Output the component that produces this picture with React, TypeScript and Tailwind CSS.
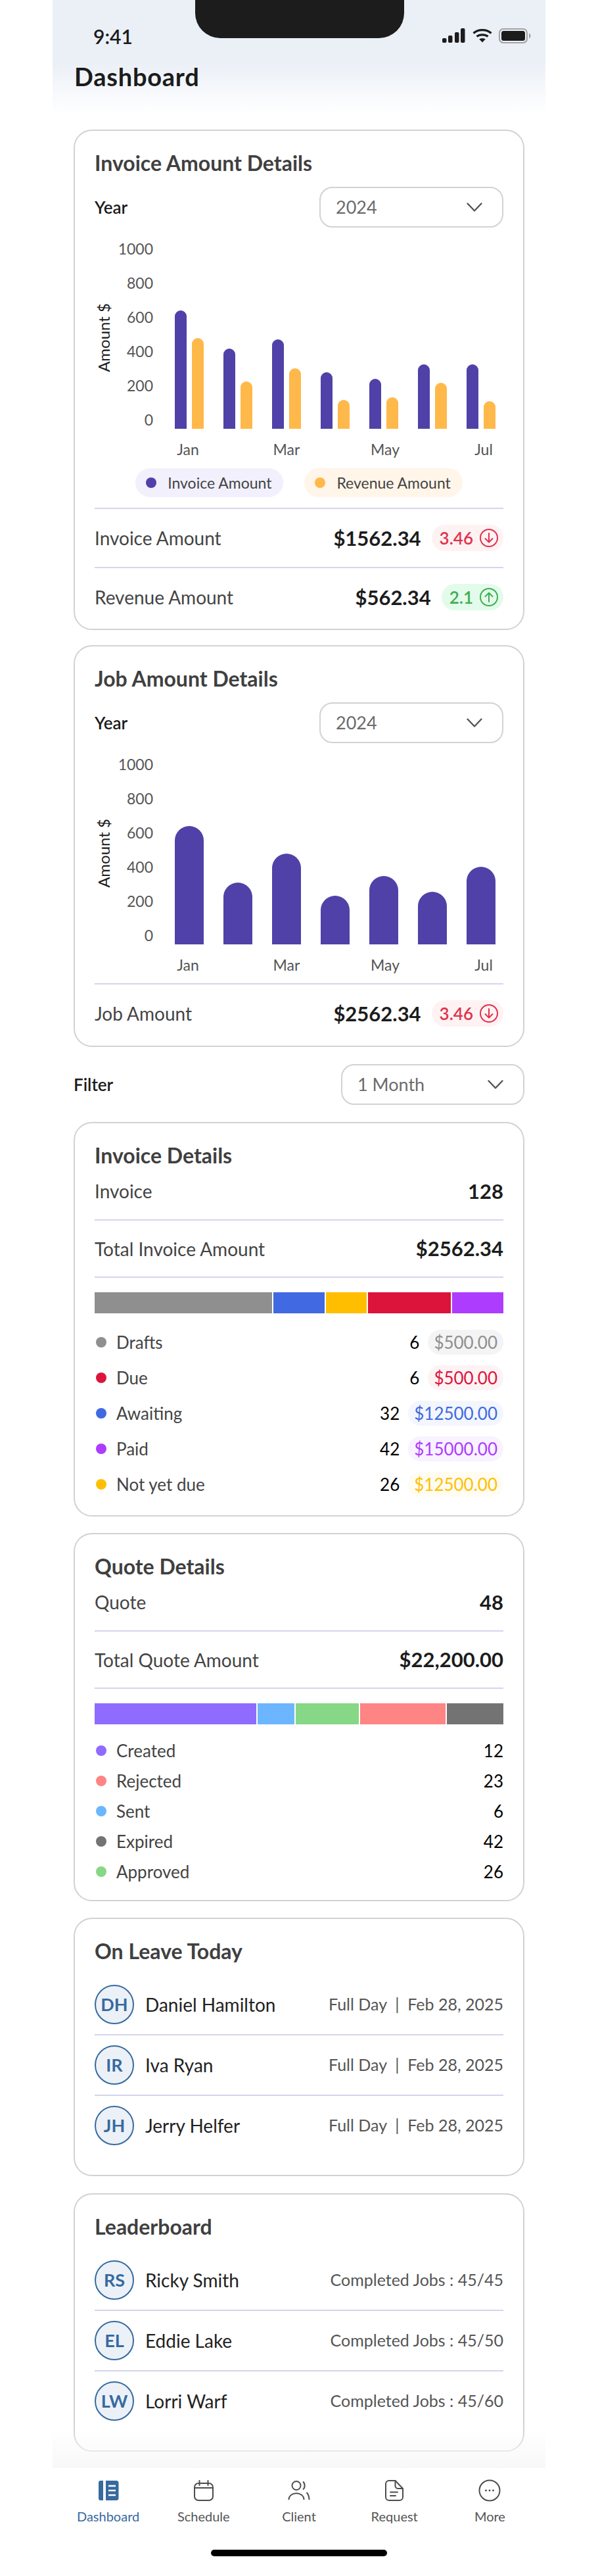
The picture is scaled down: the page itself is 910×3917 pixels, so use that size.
import React from "react";

const FONT = "font-[Lato,sans-serif]";

function Divider() {
  return <div className="h-[2px] bg-[#d6d4ee]" />;
}

function Chevron() {
  return (
    <svg width="24" height="14" viewBox="0 0 24 14" fill="none" className="shrink-0">
      <path d="M1.5 1.5 L12 12.5 L22.5 1.5" stroke="#555555" strokeWidth="2.4" strokeLinecap="round" strokeLinejoin="round" />
    </svg>
  );
}

function Select({ label, className }: { label: string; className: string }) {
  return (
    <div className={`flex h-[62px] items-center justify-between rounded-[20px] border-2 border-[#d2d2d2] bg-white pl-[23px] pr-[30px] ${className}`}>
      <span className="text-[27px] text-[#6b6b6b]">{label}</span>
      <Chevron />
    </div>
  );
}

function Card({ title, children, className = "" }: { title: string; children: React.ReactNode; className?: string }) {
  return (
    <section className={`mx-[32px] rounded-[28px] border-2 border-[#d2d2d2] bg-white px-[30px] pt-[31px] ${className}`}>
      <h2 className="text-[32px] font-bold leading-[36px] text-[#404040]">{title}</h2>
      {children}
    </section>
  );
}

function ArrowBadgeIcon({ up, color }: { up: boolean; color: string }) {
  return (
    <svg width="28" height="28" viewBox="0 0 28 28" fill="none" className="shrink-0">
      <circle cx="14" cy="14" r="13" stroke={color} strokeWidth="2" />
      {up ? (
        <path d="M14 21 V8 M8.5 13 L14 7.5 L19.5 13" stroke={color} strokeWidth="2" strokeLinecap="round" strokeLinejoin="round" />
      ) : (
        <path d="M14 7 V20 M8.5 15 L14 20.5 L19.5 15" stroke={color} strokeWidth="2" strokeLinecap="round" strokeLinejoin="round" />
      )}
    </svg>
  );
}

function AmountRow({ label, amount, delta, up }: { label: string; amount: string; delta: string; up: boolean }) {
  return (
    <div className="flex h-[88px] items-center justify-between">
      <span className="text-[28px] text-[#444444]">{label}</span>
      <div className="flex items-center gap-[16px]">
        <span className="text-[31px] font-bold text-[#1c1c1c]">{amount}</span>
        <span className={`flex h-[40px] items-center gap-[10px] rounded-full pl-[12px] pr-[8px] ${up ? "bg-[#e3fbeb]" : "bg-[#fef2f3]"}`}>
          <span className={`text-[26px] font-semibold ${up ? "text-[#3fae50]" : "text-[#e0324b]"}`}>{delta}</span>
          <ArrowBadgeIcon up={up} color={up ? "#3fae50" : "#e0324b"} />
        </span>
      </div>
    </div>
  );
}

const AXIS = ["1000", "800", "600", "400", "200", "0"];
const MONTHS = ["Jan", "", "Mar", "", "May", "", "Jul"];

function Chart({ children }: { children: React.ReactNode }) {
  return (
    <div className="mt-[6px] flex">
      <div className="flex h-[312px] w-[24px] items-center justify-center pl-[4px] pt-[10px]">
        <span className="rotate-180 whitespace-nowrap text-[24px] font-normal leading-[24px] text-[#1c1c1c] [writing-mode:vertical-rl]">Amount $</span>
      </div>
      <div className="flex w-[65px] flex-col items-end">
        {AXIS.map((a) => (
          <div key={a} className="flex h-[52px] items-center text-[23px] text-[#555555]">{a}</div>
        ))}
      </div>
      <div className="ml-[33px] flex-1">
        <div className="flex h-[300px] items-end gap-[30px]">{children}</div>
        <div className="mt-[19px] flex gap-[35px]">
          {MONTHS.map((m, i) => (
            <div key={i} className="flex h-[24px] w-[40px] items-center justify-center whitespace-nowrap text-[23px] text-[#555555]">{m}</div>
          ))}
        </div>
      </div>
    </div>
  );
}

const PAIRS: [number, number][] = [
  [180, 138],
  [122, 72],
  [136, 92],
  [86, 44],
  [76, 48],
  [98, 70],
  [98, 42],
];
const SINGLES = [180, 94, 138, 74, 104, 80, 118];

function Legend({ dot, bg, label }: { dot: string; bg: string; label: string }) {
  return (
    <div className={`flex h-[44px] items-center gap-[17px] rounded-full pl-[16px] pr-[18px] ${bg}`}>
      <span className={`h-[16px] w-[16px] rounded-full ${dot}`} />
      <span className="text-[23px] text-[#444444]">{label}</span>
    </div>
  );
}

function StatRow({ label, value, first }: { label: string; value: string; first?: boolean }) {
  return (
    <>
      <div className={`flex items-center justify-between ${first ? "mb-[7px] h-[72px]" : "h-[85px]"}`}>
        <span className="text-[28px] text-[#444444]">{label}</span>
        <span className="text-[31px] font-bold text-[#1c1c1c]">{value}</span>
      </div>
      <Divider />
    </>
  );
}

const INVOICE_SEGMENTS = [
  { w: "w-[270px]", c: "bg-[#8f8f8f]" },
  { w: "w-[78px]", c: "bg-[#4169e1]" },
  { w: "w-[62px]", c: "bg-[#ffbf00]" },
  { w: "w-[126px]", c: "bg-[#dc143c]" },
  { w: "flex-1", c: "bg-[#ad3cff]" },
];
const INVOICE_ROWS = [
  { label: "Drafts", count: "6", amount: "$500.00", dot: "bg-[#8f8f8f]", text: "text-[#8f8f8f]", bg: "bg-[#f4f4f4]" },
  { label: "Due", count: "6", amount: "$500.00", dot: "bg-[#dc143c]", text: "text-[#dc143c]", bg: "bg-[#fdf3f5]" },
  { label: "Awaiting", count: "32", amount: "$12500.00", dot: "bg-[#4169e1]", text: "text-[#4169e1]", bg: "bg-[#f3f6fd]" },
  { label: "Paid", count: "42", amount: "$15000.00", dot: "bg-[#ad3cff]", text: "text-[#ad3cff]", bg: "bg-[#f9f2ff]" },
  { label: "Not yet due", count: "26", amount: "$12500.00", dot: "bg-[#ffbf00]", text: "text-[#ffbf00]", bg: "bg-[#fffcf2]" },
];
const QUOTE_SEGMENTS = [
  { w: "w-[246px]", c: "bg-[#8f6bff]" },
  { w: "w-[56px]", c: "bg-[#6cb6ff]" },
  { w: "w-[96px]", c: "bg-[#86d886]" },
  { w: "w-[130px]", c: "bg-[#ff8484]" },
  { w: "flex-1", c: "bg-[#737373]" },
];
const QUOTE_ROWS = [
  { label: "Created", count: "12", dot: "bg-[#8f6bff]" },
  { label: "Rejected", count: "23", dot: "bg-[#ff8484]" },
  { label: "Sent", count: "6", dot: "bg-[#6cb6ff]" },
  { label: "Expired", count: "42", dot: "bg-[#737373]" },
  { label: "Approved", count: "26", dot: "bg-[#86d886]" },
];

function Segments({ items }: { items: { w: string; c: string }[] }) {
  return (
    <div className="mt-[22px] flex h-[32px] gap-[2px]">
      {items.map((s, i) => (
        <div key={i} className={`${s.w} ${s.c}`} />
      ))}
    </div>
  );
}

function PersonRow({ initials, name, right, rightSize, last }: { initials: string; name: string; right: string; rightSize: string; last?: boolean }) {
  return (
    <>
      <div className="flex h-[90px] items-center">
        <div className="flex h-[60px] w-[60px] items-center justify-center rounded-full border-2 border-[#376a9f] bg-[#ecf1f8] text-[27px] font-bold text-[#376a9f]">{initials}</div>
        <span className="ml-[17px] text-[28px] text-[#222222]">{name}</span>
        <span className={`ml-auto whitespace-pre text-[#555555] ${rightSize}`}>{right}</span>
      </div>
      {!last && <Divider />}
    </>
  );
}

function DashboardIcon() {
  return (
    <svg width="32" height="32" viewBox="0 0 32 32">
      <path d="M4 1 H8 V31 H4 A3 3 0 0 1 1 28 V4 A3 3 0 0 1 4 1 Z" fill="#376a9f" />
      <path d="M12 1 H28 A3.5 3.5 0 0 1 31.5 4.5 V27.5 A3.5 3.5 0 0 1 28 31 H12 Z" fill="#376a9f" />
      <path d="M16 9 H27 M16 16 H27 M16 23 H27" stroke="#ffffff" strokeWidth="2.6" />
    </svg>
  );
}
function ScheduleIcon() {
  return (
    <svg width="32" height="32" viewBox="0 0 32 32" fill="none" stroke="#4d4d4d" strokeWidth="2" strokeLinecap="round">
      <rect x="2" y="5" width="28" height="26" rx="6" />
      <path d="M2 12 H30 M9.5 1 V8 M22.5 1 V8" />
    </svg>
  );
}
function ClientIcon() {
  return (
    <svg width="34" height="32" viewBox="0 0 34 32" fill="none" stroke="#4d4d4d" strokeWidth="2">
      <circle cx="13" cy="8.5" r="6.5" />
      <path d="M23 2.5 C26.5 5 26.5 12 23 14.5" />
      <path d="M1.5 30 C1.5 17 24.5 17 24.5 30" />
      <path d="M28.5 19 C31 21.5 32.5 25 32.5 30" />
    </svg>
  );
}
function RequestIcon() {
  return (
    <svg width="28" height="32" viewBox="0 0 28 32" fill="none" stroke="#4d4d4d" strokeWidth="2" strokeLinecap="round" strokeLinejoin="round">
      <path d="M6 1 H15.5 L27 13 V26 A5 5 0 0 1 22 31 H6 A5 5 0 0 1 1 26 V6 A5 5 0 0 1 6 1 Z" />
      <path d="M15.5 1 V9 A4 4 0 0 0 19.5 13 H27" />
      <path d="M8 18.5 H19 M8 24 H16" />
    </svg>
  );
}
function MoreIcon() {
  return (
    <svg width="34" height="34" viewBox="0 0 34 34" fill="none">
      <circle cx="17" cy="17" r="15.5" stroke="#4d4d4d" strokeWidth="2" />
      <circle cx="11.5" cy="17" r="1.4" fill="#4d4d4d" />
      <circle cx="17" cy="17" r="1.4" fill="#4d4d4d" />
      <circle cx="22.5" cy="17" r="1.4" fill="#4d4d4d" />
    </svg>
  );
}

const NAV = [
  { label: "Dashboard", icon: <DashboardIcon />, active: true },
  { label: "Schedule", icon: <ScheduleIcon /> },
  { label: "Client", icon: <ClientIcon /> },
  { label: "Request", icon: <RequestIcon /> },
  { label: "More", icon: <MoreIcon /> },
];

function StatusIcons() {
  return (
    <div className="flex items-start gap-[11px]">
      <svg width="35" height="22" viewBox="0 0 35 22" fill="#1c1c1c">
        <rect x="0" y="15" width="6.5" height="7" rx="2" />
        <rect x="9" y="11" width="6.5" height="11" rx="2" />
        <rect x="19" y="6" width="6.5" height="16" rx="2" />
        <rect x="28" y="0" width="6.5" height="22" rx="2" />
      </svg>
      <svg width="30" height="22" viewBox="0 0 30 22" fill="none" stroke="#1c1c1c" strokeWidth="3.4">
        <path d="M1.5 7.5 C9 1 21 1 28.5 7.5" />
        <path d="M6.5 12.5 C11 9 19 9 23.5 12.5" />
        <path d="M15 21.5 L10.2 16.6 C13 14.7 17 14.7 19.8 16.6 Z" fill="#1c1c1c" stroke="none" />
      </svg>
      <svg width="49" height="23" viewBox="0 0 49 23" className="ml-[-1px]">
        <rect x="1" y="1" width="42" height="21" rx="6" fill="none" stroke="#a3a3a3" strokeWidth="2" />
        <rect x="4" y="4" width="36" height="15" rx="3.5" fill="#1c1c1c" />
        <path d="M46 7.5 C47.8 8.2 48.6 9.8 48.6 11.5 C48.6 13.2 47.8 14.8 46 15.5 Z" fill="#a3a3a3" />
      </svg>
    </div>
  );
}

export default function App() {
  return (
    <div className={`flex w-full justify-center bg-white ${FONT}`}>
      <div className="relative h-[3917px] w-[750px] overflow-hidden bg-white">
        <header className="relative h-[173px] bg-linear-to-b from-[#ebf0f7] from-55% to-white">
          <div className="absolute left-[217px] top-0 h-[58px] w-[318px] rounded-b-[38px] bg-[#1c1c1c]" />
          <div className="flex items-start justify-between pl-[62px] pr-[22px] pt-[43px]">
            <span className="text-[30px] font-semibold leading-[24px] text-[#1c1c1c]">9:41</span>
            <StatusIcons />
          </div>
          <h1 className="ml-[33px] mt-[27px] text-[38px] font-bold leading-[44px] tracking-[0.02em] text-[#1c1c1c]">Dashboard</h1>
        </header>

        <main>
          <Card title="Invoice Amount Details" className="mt-[24px] pb-[4px]">
            <div className="mt-[18px] flex items-center justify-between">
              <span className="text-[26px] font-semibold text-[#1c1c1c]">Year</span>
              <Select label="2024" className="w-[280px]" />
            </div>
            <Chart>
              {PAIRS.map(([a, b], i) => (
                <div key={i} className="flex w-[44px] items-end justify-between">
                  <div className="w-[18px] rounded-t-full bg-[#5041a8]" style={{ height: a }} />
                  <div className="w-[18px] rounded-t-full bg-[#ffb84a]" style={{ height: b }} />
                </div>
              ))}
            </Chart>
            <div className="mb-[16px] mt-[17px] flex justify-center gap-[32px]">
              <Legend dot="bg-[#5041a8]" bg="bg-[#f2f0fd]" label="Invoice Amount" />
              <Legend dot="bg-[#ffb84a]" bg="bg-[#fff5e9]" label="Revenue Amount" />
            </div>
            <Divider />
            <AmountRow label="Invoice Amount" amount="$1562.34" delta="3.46" up={false} />
            <Divider />
            <AmountRow label="Revenue Amount" amount="$562.34" delta="2.1" up />
          </Card>

          <Card title="Job Amount Details" className="mt-[23px] pb-[5px]">
            <div className="mt-[18px] flex items-center justify-between">
              <span className="text-[26px] font-semibold text-[#1c1c1c]">Year</span>
              <Select label="2024" className="w-[280px]" />
            </div>
            <Chart>
              {SINGLES.map((h, i) => (
                <div key={i} className="w-[44px] rounded-t-full bg-[#5041a8]" style={{ height: h }} />
              ))}
            </Chart>
            <div className="mt-[16px]">
              <Divider />
              <AmountRow label="Job Amount" amount="$2562.34" delta="3.46" up={false} />
            </div>
          </Card>

          <div className="mx-[32px] mt-[26px] flex items-center justify-between">
            <span className="text-[26px] font-semibold text-[#1c1c1c]">Filter</span>
            <Select label="1 Month" className="w-[279px]" />
          </div>

          <Card title="Invoice Details" className="mt-[26px] pb-[20px]">
            <StatRow first label="Invoice" value="128" />
            <StatRow label="Total Invoice Amount" value="$2562.34" />
            <Segments items={INVOICE_SEGMENTS} />
            <div className="mt-[17px]">
              {INVOICE_ROWS.map((r) => (
                <div key={r.label} className="flex h-[54px] items-center">
                  <span className={`ml-[2px] h-[16px] w-[16px] rounded-full ${r.dot}`} />
                  <span className="ml-[15px] text-[26px] text-[#444444]">{r.label}</span>
                  <span className="ml-auto text-[26px] text-black">{r.count}</span>
                  <span className={`ml-[13px] flex h-[38px] items-center rounded-full px-[9px] text-[26px] ${r.bg} ${r.text}`}>{r.amount}</span>
                </div>
              ))}
            </div>
          </Card>

          <Card title="Quote Details" className="mt-[25px] pb-[20px]">
            <StatRow first label="Quote" value="48" />
            <StatRow label="Total Quote Amount" value="$22,200.00" />
            <Segments items={QUOTE_SEGMENTS} />
            <div className="mt-[17px]">
              {QUOTE_ROWS.map((r) => (
                <div key={r.label} className="flex h-[46px] items-center">
                  <span className={`ml-[2px] h-[16px] w-[16px] rounded-full ${r.dot}`} />
                  <span className="ml-[15px] text-[26px] text-[#444444]">{r.label}</span>
                  <span className="ml-auto text-[26px] text-black">{r.count}</span>
                </div>
              ))}
            </div>
          </Card>

          <Card title="On Leave Today" className="mt-[25px] pb-[30px]">
            <div className="mt-[18px]">
              <PersonRow initials="DH" name="Daniel Hamilton" right="Full Day  |  Feb 28, 2025" rightSize="text-[25px]" />
              <PersonRow initials="IR" name="Iva Ryan" right="Full Day  |  Feb 28, 2025" rightSize="text-[25px]" />
              <PersonRow initials="JH" name="Jerry Helfer" right="Full Day  |  Feb 28, 2025" rightSize="text-[25px]" last />
            </div>
          </Card>

          <Card title="Leaderboard" className="mt-[26px] pb-[30px]">
            <div className="mt-[18px]">
              <PersonRow initials="RS" name="Ricky Smith" right="Completed Jobs : 45/45" rightSize="text-[25px]" />
              <PersonRow initials="EL" name="Eddie Lake" right="Completed Jobs : 45/50" rightSize="text-[25px]" />
              <PersonRow initials="LW" name="Lorri Warf" right="Completed Jobs : 45/60" rightSize="text-[25px]" last />
            </div>
          </Card>
        </main>

        <nav className="relative mt-[25px] bg-white">
          <div className="absolute bottom-full left-0 h-[60px] w-full bg-linear-to-b from-transparent to-[#f8f8f8]" />
          <div className="grid grid-cols-5 px-[12px] pt-[17px]">
            {NAV.map((n) => (
              <div key={n.label} className="flex flex-col items-center">
                <div className="flex h-[34px] items-center justify-center">{n.icon}</div>
                <span className={`mt-[8px] text-[20px] leading-[28px] ${n.active ? "text-[#376a9f]" : "text-[#555555]"}`}>{n.label}</span>
              </div>
            ))}
          </div>
          <div className="mx-auto mt-[37px] h-[10px] w-[268px] rounded-full bg-black" />
        </nav>
      </div>
    </div>
  );
}
